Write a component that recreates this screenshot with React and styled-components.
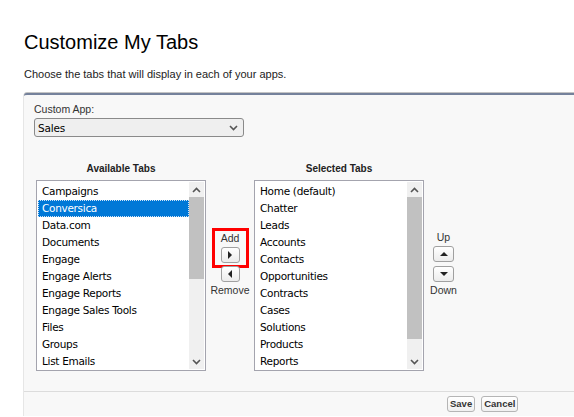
import React from 'react';
import styled, { createGlobalStyle } from 'styled-components';

const GlobalStyle = createGlobalStyle`
  body {
    margin: 0;
    background: #fff;
    font-family: 'Liberation Sans', Arial, sans-serif;
  }
`;

const listFont = `'DejaVu Sans', Tahoma, sans-serif`;

const Page = styled.div`
  width: 574px;
  height: 417px;
  overflow: hidden;
  padding: 31px 0 0 24px;
  box-sizing: border-box;
`;

const Title = styled.h1`
  margin: 0;
  font-size: 20px;
  font-weight: normal;
  color: #000;
  line-height: 22px;
`;

const Subtitle = styled.p`
  margin: 14px 0 0;
  font-size: 11px;
  color: #222;
  line-height: 14px;
`;

const Panel = styled.section`
  margin-top: 12px;
  width: 560px;
  height: 323px;
  background: #f8f8f8;
  border-top: 2px solid #74819b;
  box-shadow: 0 -1px 0 #c4c4c4, -1px 0 0 #e6e6e6;
  border-top-left-radius: 3px;
  display: flex;
  flex-direction: column;
  box-sizing: border-box;
`;

const Body = styled.div`
  flex: 1;
  padding: 8px 0 0 10px;
`;

const FieldLabel = styled.div`
  font-size: 10.5px;
  color: #333;
  line-height: 13px;
`;

const Select = styled.div`
  margin-top: 2px;
  width: 210px;
  height: 19px;
  box-sizing: border-box;
  border: 1px solid #8a8a8a;
  border-radius: 3px;
  background: #efefef;
  display: flex;
  align-items: center;
  justify-content: space-between;
  padding: 0 5px 0 3px;
  font-family: ${listFont};
  font-size: 10.5px;
  letter-spacing: -0.2px;
  color: #000;
`;

const Lists = styled.div`
  display: flex;
  align-items: flex-start;
  margin-top: 25px;
  margin-left: 2px;
`;

const Column = styled.div`
  display: flex;
  flex-direction: column;
  align-items: center;
`;

const ColumnTitle = styled.div`
  font-size: 10px;
  font-weight: bold;
  color: #222;
  line-height: 13px;
  margin-bottom: 5px;
`;

const ListBox = styled.div`
  width: 170px;
  height: 191px;
  box-sizing: border-box;
  border: 1px solid #a4a4ae;
  background: #fff;
  display: flex;
  padding: 1px;
`;

const Items = styled.div`
  flex: 1;
  padding-top: 1px;
  font-family: ${listFont};
  font-size: 10.5px;
  letter-spacing: -0.3px;
  color: #000;
`;

const Item = styled.div`
  height: 17px;
  line-height: 17px;
  padding-left: 4px;
  white-space: nowrap;
  box-sizing: border-box;
  background: ${(p) => (p.$selected ? '#0078d7' : 'transparent')};
  color: ${(p) => (p.$selected ? '#fff' : '#000')};
  outline: ${(p) => (p.$selected ? '1px dotted #cfe4f7' : 'none')};
  outline-offset: -1px;
`;

const Scrollbar = styled.div`
  width: 15px;
  display: flex;
  flex-direction: column;
  background: #f0f0f0;
`;

const ScrollArrow = styled.div`
  height: 15px;
  display: flex;
  align-items: center;
  justify-content: center;
`;

const Track = styled.div`
  flex: 1;
  position: relative;
`;

const Thumb = styled.div`
  position: absolute;
  left: 0;
  right: 0;
  background: #c1c1c1;
`;

const Controls = styled.div`
  display: flex;
  flex-direction: column;
  align-items: center;
  padding-top: ${(p) => p.$top}px;
  width: ${(p) => p.$width}px;
`;

const AddBox = styled.div`
  display: flex;
  flex-direction: column;
  align-items: center;
  width: 37px;
  height: 40px;
  box-sizing: border-box;
  border: 3px solid #f00;
  padding-top: 1px;
`;

const CtlLabel = styled.div`
  font-size: 10.5px;
  line-height: 12px;
  color: #333;
  margin-top: ${(p) => p.$mt || 0}px;
`;

const ArrowButton = styled.div`
  width: ${(p) => p.$w || 19}px;
  height: 16px;
  box-sizing: border-box;
  border: 1px solid #a0a0a0;
  border-radius: 3px;
  background: linear-gradient(#fff, #ececec);
  display: flex;
  align-items: center;
  justify-content: center;
  margin-top: ${(p) => p.$mt || 0}px;
`;

const Footer = styled.div`
  height: 24px;
  border-top: 1px solid #dcdcdc;
  display: flex;
  align-items: center;
  gap: 6px;
  padding-left: 423px;
`;

const Button = styled.button`
  font-family: 'Liberation Sans', Arial, sans-serif;
  font-size: 9.5px;
  font-weight: bold;
  color: #333;
  height: 16px;
  padding: 0 2px;
  border: 1px solid #b5b5b5;
  border-radius: 3px;
  background: linear-gradient(#fff, #f0f0f0);
  line-height: 14px;
`;

const Chevron = ({ up }) => (
  <svg width="9" height="6" viewBox="0 0 9 6">
    <path
      d={up ? 'M1 5 L4.5 1.5 L8 5' : 'M1 1 L4.5 4.5 L8 1'}
      fill="none"
      stroke="#555"
      strokeWidth="1.6"
    />
  </svg>
);

const Triangle = ({ dir }) => {
  const paths = {
    right: 'M2 0 L6 4 L2 8 Z',
    left: 'M6 0 L2 4 L6 8 Z',
    up: 'M0 6 L4 2 L8 6 Z',
    down: 'M0 2 L8 2 L4 6 Z',
  };
  return (
    <svg width="8" height="8" viewBox="0 0 8 8">
      <path d={paths[dir]} fill="#222" />
    </svg>
  );
};

const TabList = ({ items, selected, thumbHeight }) => (
  <ListBox>
    <Items>
      {items.map((it) => (
        <Item key={it} $selected={it === selected}>
          {it}
        </Item>
      ))}
    </Items>
    <Scrollbar>
      <ScrollArrow>
        <Chevron up />
      </ScrollArrow>
      <Track>
        <Thumb style={{ top: 0, height: thumbHeight }} />
      </Track>
      <ScrollArrow>
        <Chevron />
      </ScrollArrow>
    </Scrollbar>
  </ListBox>
);

const available = [
  'Campaigns',
  'Conversica',
  'Data.com',
  'Documents',
  'Engage',
  'Engage Alerts',
  'Engage Reports',
  'Engage Sales Tools',
  'Files',
  'Groups',
  'List Emails',
];

const selectedTabs = [
  'Home (default)',
  'Chatter',
  'Leads',
  'Accounts',
  'Contacts',
  'Opportunities',
  'Contracts',
  'Cases',
  'Solutions',
  'Products',
  'Reports',
];

export default function App() {
  return (
    <Page>
      <GlobalStyle />
      <Title>Customize My Tabs</Title>
      <Subtitle>Choose the tabs that will display in each of your apps.</Subtitle>
      <Panel>
        <Body>
          <FieldLabel>Custom App:</FieldLabel>
          <Select>
            <span>Sales</span>
            <Chevron />
          </Select>
          <Lists>
            <Column>
              <ColumnTitle>Available Tabs</ColumnTitle>
              <TabList items={available} selected="Conversica" thumbHeight={82} />
            </Column>
            <Controls $top={66} $width={48}>
              <AddBox>
                <CtlLabel>Add</CtlLabel>
                <ArrowButton $mt={3}>
                  <Triangle dir="right" />
                </ArrowButton>
              </AddBox>
              <ArrowButton $mt={-2}>
                <Triangle dir="left" />
              </ArrowButton>
              <CtlLabel $mt={2}>Remove</CtlLabel>
            </Controls>
            <Column>
              <ColumnTitle>Selected Tabs</ColumnTitle>
              <TabList items={selectedTabs} thumbHeight={142} />
            </Column>
            <Controls $top={69} $width={39}>
              <CtlLabel>Up</CtlLabel>
              <ArrowButton $w={21} $mt={3}>
                <Triangle dir="up" />
              </ArrowButton>
              <ArrowButton $w={21} $mt={4}>
                <Triangle dir="down" />
              </ArrowButton>
              <CtlLabel $mt={2}>Down</CtlLabel>
            </Controls>
          </Lists>
        </Body>
        <Footer>
          <Button>Save</Button>
          <Button>Cancel</Button>
        </Footer>
      </Panel>
    </Page>
  );
}
